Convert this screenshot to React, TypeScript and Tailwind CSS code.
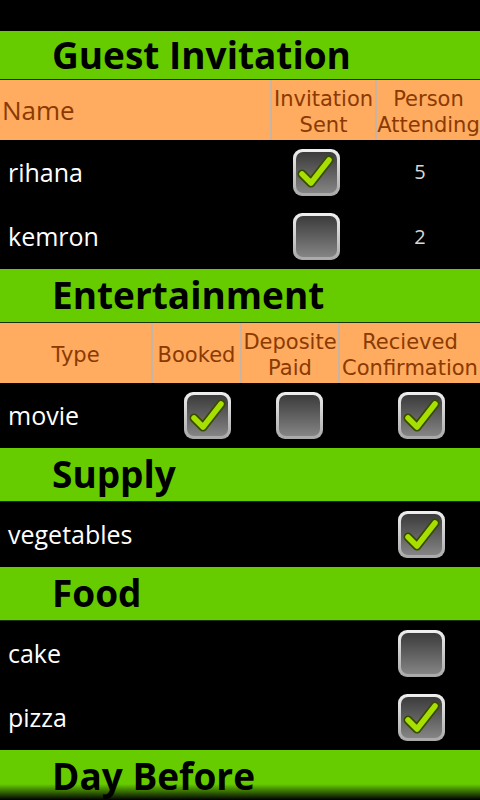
import React from "react";

const font = { fontFamily: '"Open Sans", "DejaVu Sans", sans-serif' };

const CheckBox: React.FC<{ checked?: boolean }> = ({ checked }) => (
  <div className="w-[47px] h-[47px] rounded-[9px] p-[3px] bg-gradient-to-b from-[#f0f0f0] to-[#a8a8a8] shadow-[0_0_2px_#000]">
    <div className="w-full h-full rounded-[7px] bg-gradient-to-b from-[#3c3c3c] to-[#858585] flex items-center justify-center">
      {checked && (
        <svg width="40" height="40" viewBox="0 0 40 40">
          <path
            d="M6 22 L15 31 L33 8"
            fill="none"
            stroke="#3a4a00"
            strokeWidth="9"
            strokeLinecap="round"
            strokeLinejoin="round"
          />
          <path
            d="M6 22 L15 31 L33 8"
            fill="none"
            stroke="#a6e000"
            strokeWidth="5.5"
            strokeLinecap="round"
            strokeLinejoin="round"
          />
        </svg>
      )}
    </div>
  </div>
);

const SectionTitle: React.FC<{ title: string; tall?: boolean }> = ({ title, tall }) => (
  <div
    className={`bg-[#66cc00] border-b border-[#1a3300] flex items-center pl-[52px] ${tall ? "h-[49px]" : "h-[54px]"}`}
  >
    <span className="text-[37px] font-bold text-black leading-none pb-[2px]">{title}</span>
  </div>
);

const HeadCell: React.FC<{ children: React.ReactNode; className?: string }> = ({ children, className }) => (
  <div
    className={`flex flex-col items-center justify-center text-center pt-[3px] font-['DejaVu_Sans',sans-serif] text-[21px] leading-[26px] text-[#8a3a00] ${className ?? ""}`}
  >
    {children}
  </div>
);

const Divider = () => <div className="w-[2px] bg-[#c9b4a4]" />;

const NameCell: React.FC<{ children: React.ReactNode; className?: string }> = ({ children, className }) => (
  <div className={`flex items-center pl-2 text-[25px] text-white ${className ?? ""}`}>{children}</div>
);

const guests = [
  { name: "rihana", sent: true, count: 5 },
  { name: "kemron", sent: false, count: 2 },
];

export default function App() {
  return (
    <div className="relative w-[480px] h-[800px] overflow-hidden bg-black" style={font}>
      <div className="h-[31px] bg-black" />

      <SectionTitle title="Guest Invitation" tall />
      <div className="flex h-[60px] bg-[#ffab60]">
        <div className="w-[270px] flex items-center pl-[2px] text-[26px] text-[#8a3a00]">Name</div>
        <Divider />
        <HeadCell className="w-[103px]">
          <span>Invitation</span>
          <span>Sent</span>
        </HeadCell>
        <Divider />
        <HeadCell className="flex-1">
          <span>Person</span>
          <span>Attending</span>
        </HeadCell>
      </div>
      {guests.map((g) => (
        <div key={g.name} className="flex h-[64.5px]">
          <NameCell className="w-[272px]">{g.name}</NameCell>
          <div className="w-[88px] flex items-center justify-center">
            <CheckBox checked={g.sent} />
          </div>
          <div className="flex-1 flex items-center justify-center text-[20px] text-[#d8d8d8]">{g.count}</div>
        </div>
      ))}

      <SectionTitle title="Entertainment" />
      <div className="flex h-[60px] bg-[#ffab60]">
        <HeadCell className="w-[151px]">Type</HeadCell>
        <Divider />
        <HeadCell className="w-[87px]">Booked</HeadCell>
        <Divider />
        <HeadCell className="w-[96px]">
          <span>Deposite</span>
          <span>Paid</span>
        </HeadCell>
        <Divider />
        <HeadCell className="flex-1">
          <span>Recieved</span>
          <span>Confirmation</span>
        </HeadCell>
      </div>
      <div className="flex h-[65px]">
        <NameCell className="w-[184px]">movie</NameCell>
        <div className="w-[92px] flex items-center">
          <CheckBox checked />
        </div>
        <div className="w-[122px] flex items-center">
          <CheckBox />
        </div>
        <div className="flex-1 flex items-center">
          <CheckBox checked />
        </div>
      </div>

      <SectionTitle title="Supply" />
      <div className="flex h-[65px]">
        <NameCell className="w-[398px]">vegetables</NameCell>
        <div className="flex-1 flex items-center">
          <CheckBox checked />
        </div>
      </div>

      <SectionTitle title="Food" />
      {[
        { name: "cake", done: false },
        { name: "pizza", done: true },
      ].map((f) => (
        <div key={f.name} className="flex h-[64.5px]">
          <NameCell className="w-[398px]">{f.name}</NameCell>
          <div className="flex-1 flex items-center">
            <CheckBox checked={f.done} />
          </div>
        </div>
      ))}

      <SectionTitle title="Day Before" />

      <div className="absolute left-0 right-0 bottom-0 h-[16px] bg-gradient-to-b from-transparent to-black" />
    </div>
  );
}
